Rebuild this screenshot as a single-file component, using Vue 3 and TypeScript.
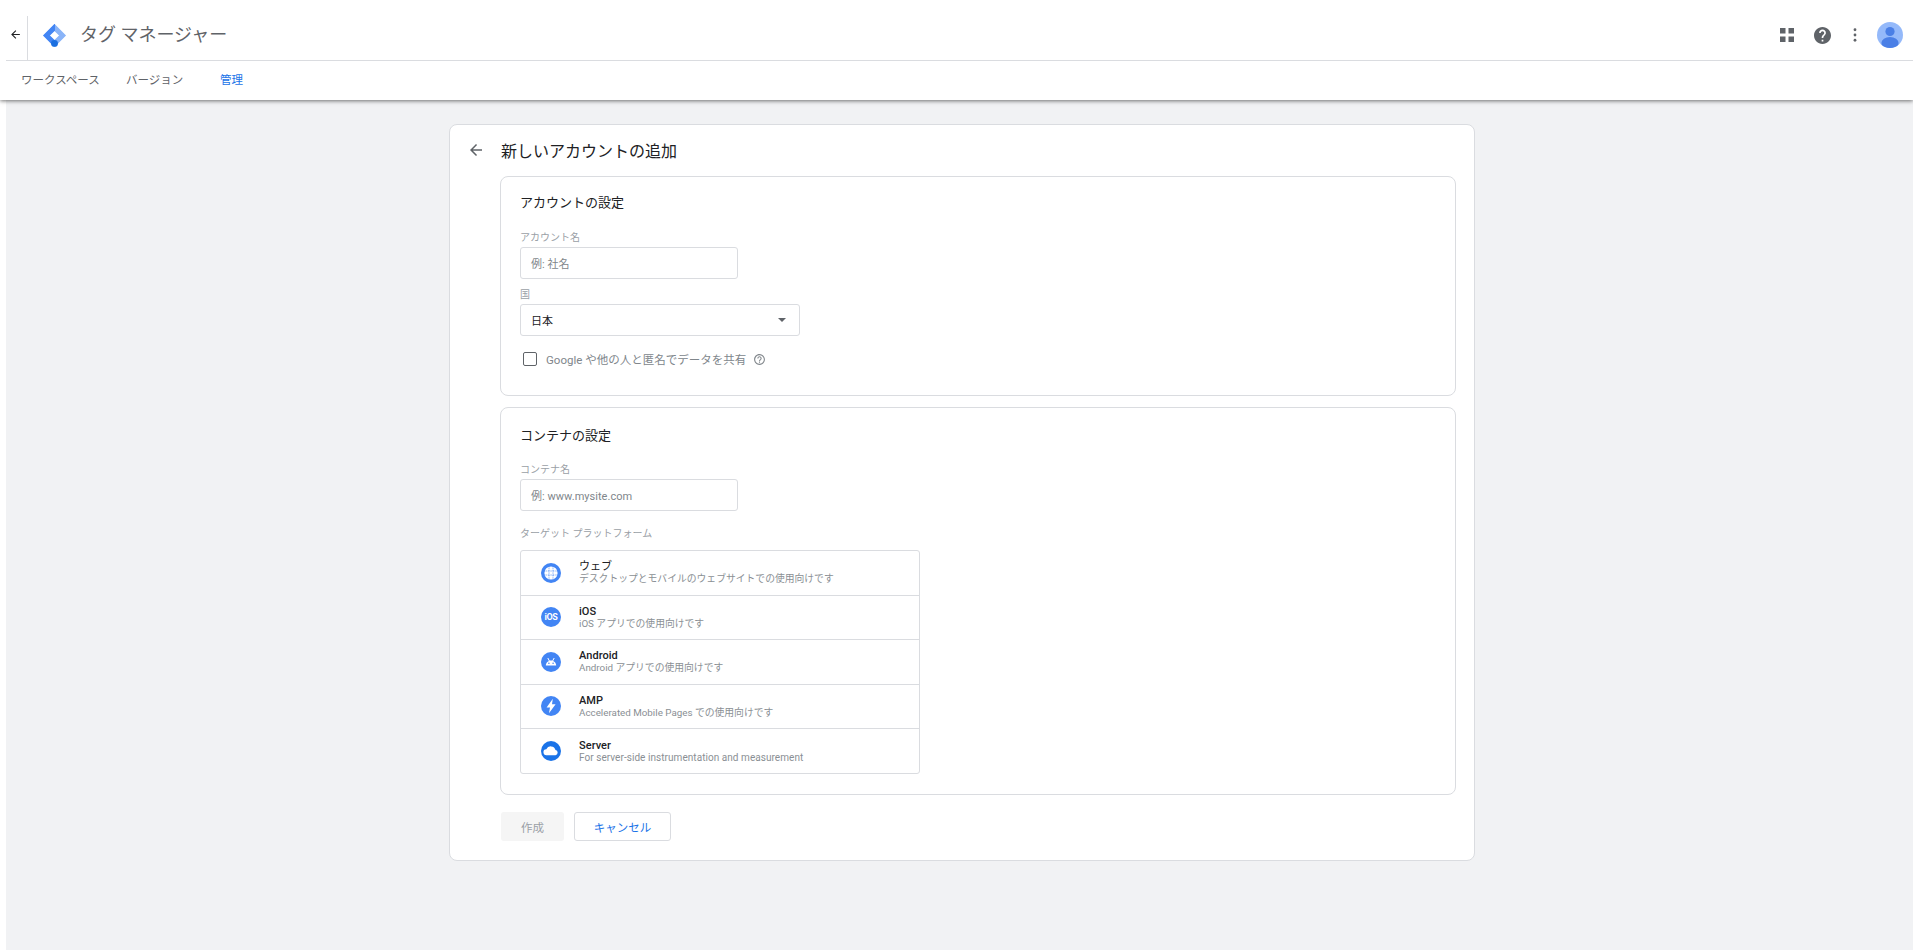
<script setup lang="ts">
interface Platform { key: string; name: string; desc: string }
const platforms: Platform[] = [
  { key: 'web', name: 'ウェブ', desc: 'デスクトップとモバイルのウェブサイトでの使用向けです' },
  { key: 'ios', name: 'iOS', desc: 'iOS アプリでの使用向けです' },
  { key: 'android', name: 'Android', desc: 'Android アプリでの使用向けです' },
  { key: 'amp', name: 'AMP', desc: 'Accelerated Mobile Pages での使用向けです' },
  { key: 'server', name: 'Server', desc: 'For server-side instrumentation and measurement' },
]
const arrow = 'M20 11H7.83l5.59-5.59L12 4l-8 8 8 8 1.41-1.41L7.83 13H20v-2z'
</script>

<template>
  <div class="shell">
    <header class="topbar">
      <div class="toprow">
        <button class="up">
          <svg viewBox="0 0 24 24" width="13" height="13"><path :d="arrow" fill="#202124" /></svg>
        </button>
        <span class="sep"></span>
        <svg class="logo" viewBox="0 0 24 24" width="25" height="25">
          <g stroke-linejoin="round" stroke-width="1">
            <polygon points="12,1.5 22.5,12 12,22.5 12,17 17,12 12,7" fill="#8ab4f8" stroke="#8ab4f8" />
            <polygon points="12,1.5 1.5,12 11,21.5 12,17 7,12 12,7" fill="#4285f4" stroke="#4285f4" />
          </g>
          <circle cx="12" cy="19.6" r="3.3" fill="#1a6fe0" />
        </svg>
        <span class="product">タグ マネージャー</span>
        <div class="actions">
          <svg viewBox="0 0 14 14" width="14" height="14">
            <path d="M0 0h5.5v5.5H0zM8.5 0H14v5.5H8.5zM0 8.5h5.5V14H0zM8.5 8.5H14V14H8.5z" fill="#5f6368" />
          </svg>
          <svg class="help" viewBox="2 2 20 20" width="17" height="17">
            <path d="M12 2C6.48 2 2 6.48 2 12s4.48 10 10 10 10-4.48 10-10S17.52 2 12 2zm1 17h-2v-2h2v2zm2.07-7.75l-.9.92C13.45 12.9 13 13.5 13 15h-2v-.5c0-1.1.45-2.1 1.17-2.83l1.24-1.26c.37-.36.59-.86.59-1.41 0-1.1-.9-2-2-2s-2 .9-2 2H8c0-2.21 1.79-4 4-4s4 1.79 4 4c0 .88-.36 1.68-.93 2.25z" fill="#5f6368" />
          </svg>
          <svg class="more" viewBox="0 0 4 16" width="4" height="14">
            <circle cx="2" cy="2" r="1.6" fill="#5f6368" /><circle cx="2" cy="8" r="1.6" fill="#5f6368" /><circle cx="2" cy="14" r="1.6" fill="#5f6368" />
          </svg>
          <svg class="avatar" viewBox="0 0 26 26" width="26" height="26">
            <defs><clipPath id="av"><circle cx="13" cy="13" r="13" /></clipPath></defs>
            <circle cx="13" cy="13" r="13" fill="#94b9fa" />
            <g clip-path="url(#av)" fill="#4a7fe6">
              <circle cx="13" cy="9.5" r="4.6" />
              <ellipse cx="13" cy="21" rx="8.6" ry="6" />
            </g>
          </svg>
        </div>
      </div>
      <nav class="tabs">
        <a class="tab w1">ワークスペース</a>
        <a class="tab w2">バージョン</a>
        <a class="tab active">管理</a>
      </nav>
    </header>

    <main class="main">
      <section class="card">
        <div class="card-head">
          <svg viewBox="0 0 24 24" width="18" height="18"><path :d="arrow" fill="#5f6368" /></svg>
          <h1>新しいアカウントの追加</h1>
        </div>

        <div class="panel first">
          <h2>アカウントの設定</h2>
          <label class="lbl">アカウント名</label>
          <div class="input">例: 社名</div>
          <label class="lbl lbl-country">国</label>
          <div class="select">
            <span>日本</span>
            <i class="caret"></i>
          </div>
          <div class="check">
            <span class="box"></span>
            <span class="check-text">Google や他の人と匿名でデータを共有</span>
            <svg viewBox="0 0 24 24" width="13" height="13">
              <path d="M11 18h2v-2h-2v2zm1-16C6.48 2 2 6.48 2 12s4.48 10 10 10 10-4.48 10-10S17.52 2 12 2zm0 18c-4.41 0-8-3.59-8-8s3.59-8 8-8 8 3.59 8 8-3.59 8-8 8zm0-14c-2.21 0-4 1.79-4 4h2c0-1.1.9-2 2-2s2 .9 2 2c0 2-3 1.75-3 5h2c0-2.25 3-2.5 3-5 0-2.21-1.79-4-4-4z" fill="#80868b" />
            </svg>
          </div>
        </div>

        <div class="panel second">
          <h2>コンテナの設定</h2>
          <label class="lbl">コンテナ名</label>
          <div class="input">例: www.mysite.com</div>
          <label class="lbl lbl-target">ターゲット プラットフォーム</label>
          <ul class="platforms">
            <li v-for="p in platforms" :key="p.key" class="platform">
              <svg class="picon" viewBox="0 0 20 20" width="20" height="20">
                <template v-if="p.key === 'web'">
                  <circle cx="10" cy="10" r="10" fill="#4285f4" />
                  <circle cx="10" cy="10" r="6.6" fill="#fff" />
                  <path d="M3.5 8h13M3.5 12h13M8 3.5v13M12 3.5v13" stroke="#4285f4" stroke-width=".7" stroke-dasharray="1 .7" />
                </template>
                <template v-else-if="p.key === 'ios'">
                  <circle cx="10" cy="10" r="10" fill="#4285f4" />
                  <text x="10" y="13.3" text-anchor="middle" class="ios-t">iOS</text>
                </template>
                <template v-else-if="p.key === 'android'">
                  <circle cx="10" cy="10" r="10" fill="#4285f4" />
                  <path d="M4.8 13.6c0-2.9 2.3-5.2 5.2-5.2s5.2 2.3 5.2 5.2z" fill="#fff" />
                  <path d="M6.8 6l1.6 3M13.2 6l-1.6 3" stroke="#fff" stroke-width="1" />
                  <circle cx="7.9" cy="11.3" r=".8" fill="#4285f4" />
                  <circle cx="12.1" cy="11.3" r=".8" fill="#4285f4" />
                </template>
                <template v-else-if="p.key === 'amp'">
                  <circle cx="10" cy="10" r="10" fill="#4285f4" />
                  <path d="M11.8 2.8L5.6 11.4h3.4L8 17.2l6.6-9h-3.6z" fill="#fff" />
                </template>
                <template v-else>
                  <circle cx="10" cy="10" r="10" fill="#1a73e8" />
                  <path d="M5.6 14.2a3 3 0 0 1-.3-6 4.9 4.9 0 0 1 9.2.9 2.6 2.6 0 0 1 .1 5.1z" fill="#fff" />
                </template>
              </svg>
              <div class="ptext">
                <div class="pname" :class="{ regular: p.key === 'web' }">{{ p.name }}</div>
                <div class="pdesc" :class="{ latin: p.key === 'server' }">{{ p.desc }}</div>
              </div>
            </li>
          </ul>
        </div>

        <div class="buttons">
          <button class="btn create">作成</button>
          <button class="btn cancel">キャンセル</button>
        </div>
      </section>
    </main>
  </div>
</template>

<style>
html, body { margin: 0; background: #fff; }
</style>

<style scoped>
.shell {
  min-height: 100vh;
  display: flex;
  flex-direction: column;
  font-family: Roboto, "Noto Sans CJK JP", sans-serif;
  color: #202124;
}
.topbar {
  position: relative;
  z-index: 1;
  background: #fff;
  box-shadow: 0 1px 4px rgba(0, 0, 0, 0.55);
}
.toprow {
  height: 60px;
  display: flex;
  align-items: flex-end;
  border-bottom: 1px solid #dadce0;
  margin-left: 6px;
}
.up {
  width: 18px;
  height: 44px;
  padding: 6px 0 0;
  border: 0;
  background: none;
  display: flex;
  align-items: flex-start;
  justify-content: center;
  margin-right: 3px;
}
.up svg { margin-top: 6px; flex: none; }
.sep { width: 1px; height: 44px; background: #dadce0; }
.logo { margin: 0 0 12px 14px; }
.product {
  margin: 0 0 13px 13px;
  font-size: 18px;
  line-height: 24px;
  color: #5f6368;
}
.actions {
  margin-left: auto;
  height: 60px;
  padding-top: 10px;
  box-sizing: border-box;
  display: flex;
  align-items: center;
  padding-right: 10px;
}
.help { margin-left: 20px; }
.more { margin-left: 22px; }
.avatar { margin-left: 20px; }
.tabs {
  height: 39px;
  padding-bottom: 4px;
  box-sizing: border-box;
  display: flex;
  align-items: center;
  padding-left: 21px;
  font-size: 11.5px;
  color: #5f6368;
}
.w1 { width: 105px; }
.w2 { width: 94px; }
.active { color: #1a73e8; }
.main {
  flex: 1;
  margin-left: 6px;
  padding: 24px 0 90px 443px;
  background: #f1f2f4;
}
.card {
  box-sizing: border-box;
  width: 1026px;
  height: 737px;
  background: #fff;
  border: 1px solid #dadce0;
  border-radius: 8px;
  padding-left: 50px;
}
.card-head {
  height: 51px;
  padding-bottom: 2px;
  box-sizing: border-box;
  display: flex;
  align-items: center;
  margin-left: -33px;
}
.card-head h1 {
  margin: 0 0 0 16px;
  font-size: 16px;
  font-weight: 400;
}
.panel {
  box-sizing: border-box;
  width: 956px;
  border: 1px solid #dadce0;
  border-radius: 8px;
  padding: 0 19px;
}
.first { height: 220px; margin-bottom: 11px; }
.second { height: 388px; }
h2 {
  margin: 0;
  line-height: 24px;
  font-size: 13px;
  font-weight: 400;
  box-sizing: content-box;
}
.first h2 { padding-top: 14px; height: 28px; }
.second h2 { padding-top: 16px; height: 27px; }
.lbl {
  display: block;
  margin-top: 12px;
  height: 14px;
  line-height: 14px;
  font-size: 10px;
  color: #9aa0a6;
}
.lbl-country { margin-top: 9px; }
.lbl-target { margin-top: 16px; }
.input, .select {
  box-sizing: border-box;
  height: 32px;
  border: 1px solid #dadce0;
  border-radius: 3px;
  display: flex;
  align-items: center;
  padding-left: 10px;
  padding-bottom: 1px;
  font-size: 11px;
  letter-spacing: 0.03px;
  margin-top: 2px;
}
.input { width: 218px; color: #80868b; }
.select {
  width: 280px;
  color: #202124;
  justify-content: space-between;
  padding-right: 13px;
}
.caret {
  width: 0;
  height: 0;
  border-left: 4px solid transparent;
  border-right: 4px solid transparent;
  border-top: 4px solid #5f6368;
}
.check {
  display: flex;
  align-items: center;
  height: 16px;
  margin-top: 15px;
  padding-left: 3px;
  font-size: 11.5px;
  color: #80868b;
}
.box {
  box-sizing: border-box;
  width: 14px;
  height: 14px;
  border: 1px solid #5f6368;
  border-radius: 2px;
}
.check-text { margin: 0 7px 0 9px; }
.platforms {
  list-style: none;
  box-sizing: border-box;
  width: 400px;
  height: 224px;
  margin: 9px 0 0;
  padding: 0;
  border: 1px solid #dadce0;
  border-radius: 3px;
}
.platform {
  box-sizing: border-box;
  height: 44.5px;
  display: flex;
  align-items: center;
  padding-left: 20px;
  border-bottom: 1px solid #dadce0;
}
.platform:last-child { border-bottom: 0; }
.ptext { margin-left: 18px; }
.pname { font-size: 11px; line-height: 13px; font-weight: 500; color: #202124; letter-spacing: 0.05px; }
.regular { font-weight: 400; }
.pdesc { font-size: 9.8px; line-height: 12px; color: #8a8f94; }
.latin { font-size: 10px; letter-spacing: 0.05px; }
.ios-t { font: 700 9px Roboto, sans-serif; fill: #fff; letter-spacing: -0.3px; }
.buttons {
  display: flex;
  gap: 10px;
  margin-top: 17px;
}
.btn {
  box-sizing: border-box;
  height: 29px;
  font-family: inherit;
  font-size: 11.5px;
  border-radius: 3px;
}
.create {
  width: 63px;
  margin-left: 1px;
  background: #f5f5f5;
  border: 0;
  color: #9aa0a6;
}
.cancel {
  width: 97px;
  background: #fff;
  border: 1px solid #dadce0;
  color: #1a73e8;
}
</style>
